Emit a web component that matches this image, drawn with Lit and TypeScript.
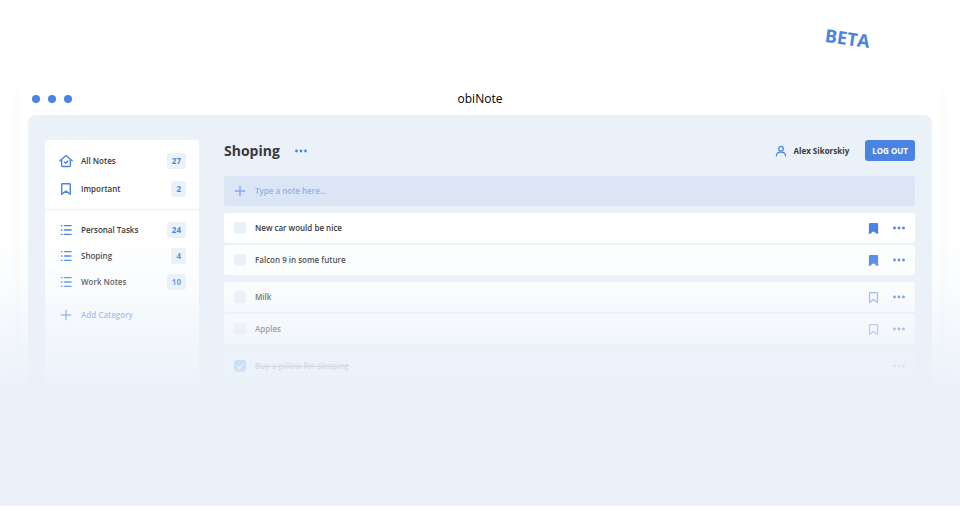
import { LitElement, html, css, svg, nothing } from "lit";
import { customElement, property } from "lit/decorators.js";
import { classMap } from "lit/directives/class-map.js";

interface Note {
  text: string;
  starred?: boolean;
  done?: boolean;
}

const icons = {
  home: svg`<path d="M1 7.800 8 1.800l7 6M3 6.400V13a1.200 1.200 0 0 0 1.200 1.200h7.600A1.200 1.200 0 0 0 13 13V6.400" /><path d="m6.300 9.200 1.400 1.300 2.300-2.500" />`,
  bookmark: svg`<path d="M4 2h8a.9.9 0 0 1 .9.9V14L8 10.400 3.100 14V2.900A.9.9 0 0 1 4 2z" />`,
  list: svg`<path d="M6.200 3h7.600M6.200 8h7.600M6.200 13h7.600M2.700 3h.6M2.700 8h.6M2.700 13h.6" />`,
  plus: svg`<path d="M8 2.500v11M2.500 8h11" />`,
  user: svg`<circle cx="8" cy="5" r="3.200" /><path d="M1.800 14.600c.3-3.400 2.600-5 6.200-5s5.900 1.600 6.200 5" />`,
};

const icon = (name: keyof typeof icons, cls = "") =>
  html`<svg class="icon ${cls}" viewBox="0 0 16 16" aria-hidden="true">${icons[name]}</svg>`;

const dots = (label: string) => html`
  <button class="dots" aria-label=${label}>
    <svg viewBox="0 0 12 4" aria-hidden="true">
      <circle cx="1.500" cy="2" r="1.400" /><circle cx="6" cy="2" r="1.400" /><circle cx="10.500" cy="2" r="1.400" />
    </svg>
  </button>
`;

const shared = css`
  * {
    box-sizing: border-box;
  }
  button {
    font: inherit;
    border: 0;
    padding: 0;
    background: none;
    color: inherit;
    cursor: pointer;
  }
  .icon {
    display: block;
    flex: none;
    width: 14px;
    height: 14px;
    fill: none;
    stroke: #4a84e0;
    stroke-width: 1.600;
    stroke-linecap: round;
    stroke-linejoin: round;
  }
  .dots svg {
    display: block;
    width: 12px;
    height: 4px;
    fill: #4a84e0;
  }
`;

@customElement("side-bar")
export class SideBar extends LitElement {
  static styles = [
    shared,
    css`
      :host {
        display: block;
        background: #fff;
        border-radius: 3px;
      }
      ul {
        list-style: none;
        margin: 0;
        padding: 13px 13px 12px 14px;
        display: grid;
        gap: 12px;
      }
      ul + ul {
        border-top: 1px solid #eaf1f9;
        padding-top: 12px;
        gap: 10px;
      }
      a {
        display: flex;
        align-items: center;
        height: 16px;
        color: #3a3a3c;
        text-decoration: none;
      }
      .name {
        flex: 1;
        margin-left: 8px;
      }
      .count {
        padding: 0 5px;
        line-height: 16px;
        border-radius: 3px;
        background: #eaf1f9;
        color: #4a84e0;
        font-weight: 700;
      }
      .add {
        display: flex;
        align-items: center;
        margin: 6px 14px;
        gap: 8px;
        color: #6a9ae8;
      }
      .add .icon {
        stroke: #6a9ae8;
      }
    `,
  ];

  private item(name: string, count: number, glyph: keyof typeof icons) {
    return html`<li>
      <a href="#">${icon(glyph)}<span class="name">${name}</span><span class="count">${count}</span></a>
    </li>`;
  }

  render() {
    return html`
      <nav>
        <ul>
          ${this.item("All Notes", 27, "home")} ${this.item("Important", 2, "bookmark")}
        </ul>
        <ul>
          ${this.item("Personal Tasks", 24, "list")} ${this.item("Shoping", 4, "list")}
          ${this.item("Work Notes", 10, "list")}
        </ul>
      </nav>
      <button class="add">${icon("plus")}Add Category</button>
    `;
  }
}

@customElement("note-row")
export class NoteRow extends LitElement {
  @property({ attribute: false }) note: Note = { text: "" };

  static styles = [
    shared,
    css`
      :host {
        display: block;
      }
      .row {
        display: flex;
        align-items: center;
        height: 30px;
        padding: 0 10px;
        background: #fff;
        border-radius: 3px;
      }
      label {
        flex: 1;
        display: flex;
        align-items: center;
        gap: 9px;
      }
      .row.done {
        background: #f4f7fd;
      }
      .done label {
        color: #858b97;
        text-decoration: line-through;
      }
      .done .dots {
        opacity: 0.6;
      }
      input {
        appearance: none;
        display: grid;
        place-items: center;
        width: 12px;
        height: 12px;
        margin: 0;
        border-radius: 3px;
        background: #eaf1f9;
      }
      input:checked {
        background: #6fa0ec;
      }
      input:checked::after {
        content: "";
        width: 6px;
        height: 3px;
        border: solid #fff;
        border-width: 0 0 1px 1px;
        transform: translateY(-1px) rotate(-45deg);
      }
      .mark {
        margin-right: 13px;
      }
      .mark .icon {
        width: 13px;
        height: 13px;
        stroke: #83a9ea;
      }
      .mark .icon.filled {
        fill: #4a84e0;
        stroke: #4a84e0;
      }
    `,
  ];

  render() {
    const { text, starred, done } = this.note;
    return html`
      <div class=${classMap({ row: true, done: !!done })}>
        <label><input type="checkbox" aria-label=${text || "Note"} .checked=${!!done} />${text}</label>
        ${done
          ? nothing
          : html`<button class="mark" aria-label="Important">${icon("bookmark", starred ? "filled" : "")}</button>`}
        ${text ? dots("Note actions") : nothing}
      </div>
    `;
  }
}

@customElement("app-root")
export class AppRoot extends LitElement {
  private groups: Note[][] = [
    [
      { text: "New car would be nice", starred: true },
      { text: "Falcon 9 in some future", starred: true },
    ],
    [{ text: "Milk" }, { text: "Apples" }],
    [
      { text: "Buy a pillow for sleeping", done: true },
      { text: "", done: true },
    ],
  ];

  static styles = [
    shared,
    css`
      :host {
        display: block;
        font: 600 8px/12px "Open Sans", "Noto Sans", sans-serif;
        color: #3a3a3c;
        background: #fff;
      }
      .hero {
        position: relative;
        min-height: calc(100vh - 5px);
        padding: 0 20px 40px;
        overflow: hidden;
      }
      .hero::after {
        content: "";
        position: absolute;
        inset: 235px 0 0;
        background: linear-gradient(
          rgba(234, 241, 249, 0),
          rgba(234, 241, 249, 0.26) 55px,
          rgba(234, 241, 249, 0.54) 95px,
          rgba(234, 241, 249, 0.8) 135px,
          #eaf1f9 160px
        );
        pointer-events: none;
      }
      .top {
        display: flex;
        justify-content: flex-end;
        align-items: center;
        height: 76px;
        padding-right: 70px;
      }
      .beta {
        font-size: 18px;
        line-height: 24px;
        font-weight: 700;
        color: #4a84e0;
        transform: rotate(8deg);
      }
      .window {
        margin-top: 6px;
        padding: 0 8px 8px;
        background: #fff;
        border-radius: 8px;
        box-shadow: 0 8px 16px rgba(0, 0, 0, 0.04);
      }
      .titlebar {
        display: grid;
        grid-template-columns: 1fr auto 1fr;
        align-items: center;
        height: 33px;
        padding: 0 4px;
      }
      .lights {
        display: flex;
        gap: 8px;
      }
      .lights i {
        width: 8px;
        height: 8px;
        border-radius: 50%;
        background: #4a84e0;
      }
      .title {
        font-size: 12px;
        line-height: 20px;
        font-weight: 400;
        color: #000;
      }
      .app {
        display: grid;
        grid-template-columns: 154px 1fr;
        gap: 25px;
        padding: 25px 17px;
        border-radius: 8px;
        background: #eaf1f9;
      }
      header {
        display: flex;
        align-items: center;
        height: 21px;
        margin-bottom: 15px;
      }
      h1 {
        margin: 0 15px 0 0;
        font-size: 14px;
        line-height: 20px;
        font-weight: 700;
      }
      .user {
        display: flex;
        align-items: center;
        gap: 6px;
        margin: 0 16px 0 auto;
        font-weight: 700;
      }
      .user .icon {
        width: 12px;
        height: 12px;
      }
      .logout {
        height: 21px;
        padding: 0 7px;
        border-radius: 3px;
        background: #4a84e0;
        color: #fff;
        font-weight: 700;
      }
      .new {
        display: flex;
        align-items: center;
        gap: 8px;
        height: 30px;
        padding: 0 9px;
        border-radius: 3px;
        background: #dce5f6;
      }
      .new .icon {
        stroke: #83a9ea;
      }
      .new input {
        flex: 1;
        padding: 0;
        border: 0;
        outline: 0;
        background: none;
        font: inherit;
        color: #3a3a3c;
      }
      .new input::placeholder {
        color: #8fb0ea;
        opacity: 1;
      }
      .group {
        display: grid;
        gap: 2px;
        margin-top: 7px;
      }
    `,
  ];

  render() {
    return html`
      <div class="hero">
        <div class="top"><span class="beta">BETA</span></div>
        <div class="window">
          <div class="titlebar">
            <div class="lights"><i></i><i></i><i></i></div>
            <span class="title">obiNote</span>
          </div>
          <div class="app">
            <side-bar></side-bar>
            <main>
              <header>
                <h1>Shoping</h1>
                ${dots("List actions")}
                <span class="user">${icon("user")}Alex Sikorskiy</span>
                <button class="logout">LOG OUT</button>
              </header>
              <div class="new">
                ${icon("plus")}
                <input type="text" aria-label="New note" placeholder="Type a note here..." />
              </div>
              ${this.groups.map(
                (group) => html`<div class="group">
                  ${group.map((note) => html`<note-row .note=${note}></note-row>`)}
                </div>`
              )}
            </main>
          </div>
        </div>
      </div>
    `;
  }
}
